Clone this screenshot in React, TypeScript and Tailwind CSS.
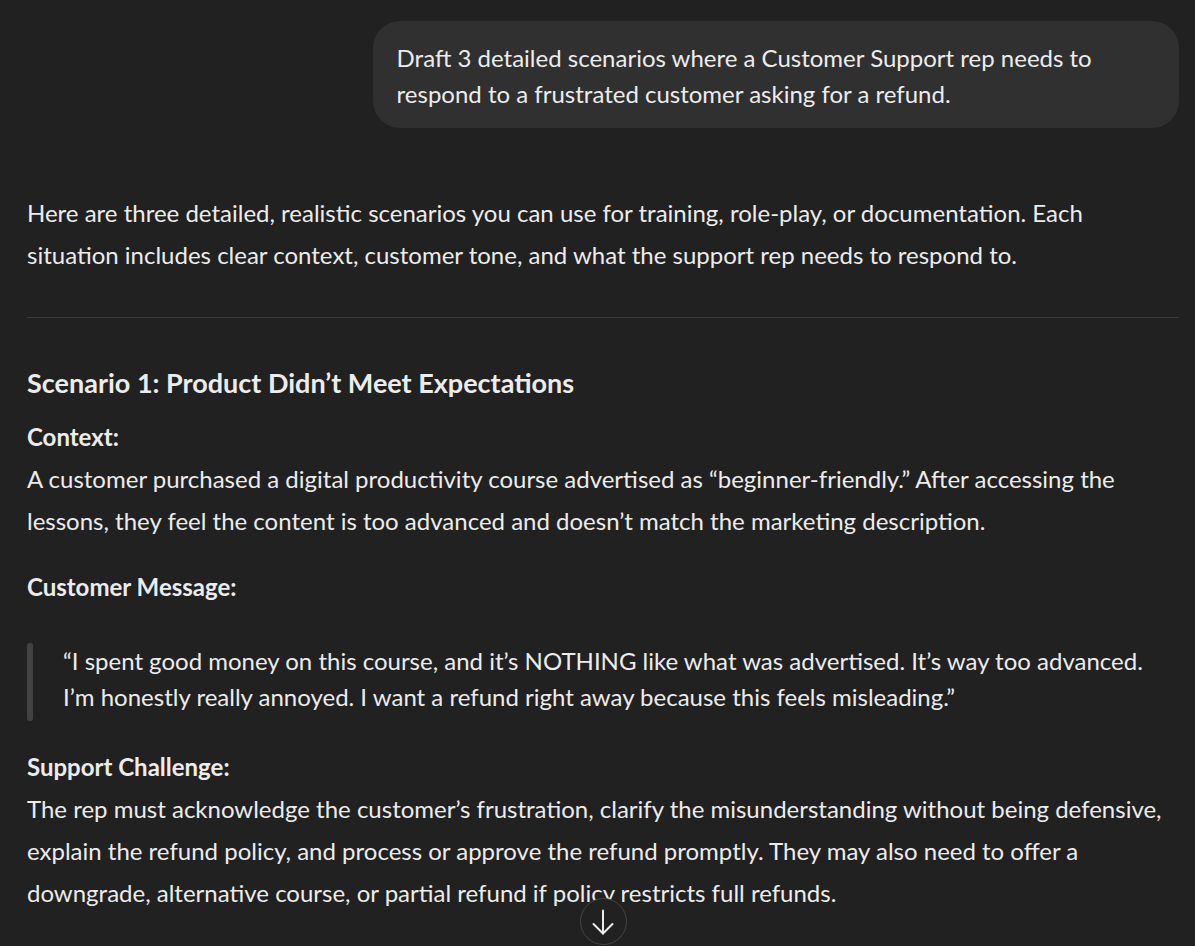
import React from "react";

export default function App() {
  return (
    <div
      className="h-[946px] w-full overflow-hidden bg-[#212121] text-[#ececec]"
      style={{ fontFamily: '"Segoe UI", Lato, "Noto Sans", sans-serif' }}
    >
      <div className="relative h-full pl-[27px] pr-[16px]">
        <div className="flex justify-end pt-[21px]">
          <div className="max-w-[70%] rounded-[27px] bg-[#303030] px-6 pt-[19px] pb-[16px] text-[24px] leading-[36px]">
            Draft 3 detailed scenarios where a Customer Support rep needs to respond to a frustrated customer asking for a refund.
          </div>
        </div>

        <div className="mt-[64px] text-[24px] leading-[42px]">
          <p>
            Here are three detailed, realistic scenarios you can use for training, role-play, or documentation. Each situation includes clear context, customer tone, and what the support rep needs to respond to.
          </p>
          <hr className="mt-[41px] border-0 border-t border-[#3a3a3a]" />
          <h3 className="mt-[47px] text-[27px] leading-[36px] font-bold">
            Scenario 1: Product Didn’t Meet Expectations
          </h3>
          <p className="mt-[15px]">
            <strong className="font-bold">Context:</strong>
            <br />
            A customer purchased a digital productivity course advertised as “beginner-friendly.” After accessing the lessons, they feel the content is too advanced and doesn’t match the marketing description.
          </p>
          <p className="mt-[24px]">
            <strong className="font-bold">Customer Message:</strong>
          </p>
          <blockquote className="mt-[35px] flex gap-[30px]">
            <div className="w-[6px] shrink-0 rounded-full bg-[#424242]" />
            <p className="pt-0 pb-[6px] leading-[36px]">
              “I spent good money on this course, and it’s NOTHING like what was advertised. It’s way too advanced. I’m honestly really annoyed. I want a refund right away because this feels misleading.”
            </p>
          </blockquote>
          <p className="mt-[25px]">
            <strong className="font-bold">Support Challenge:</strong>
            <br />
            The rep must acknowledge the customer’s frustration, clarify the misunderstanding without being defensive, explain the refund policy, and process or approve the refund promptly. They may also need to offer a downgrade, alternative course, or partial refund if policy restricts full refunds.
          </p>
        </div>

        <div className="absolute bottom-[1px] left-[27px] right-[16px] flex justify-center">
          <button className="flex h-[47px] w-[47px] items-center justify-center rounded-full border border-[#454545] bg-[#212121] text-[#ececec]">
            <svg width="26" height="26" viewBox="0 0 26 26" fill="none" stroke="currentColor" strokeWidth="2" strokeLinecap="round" strokeLinejoin="round">
              <path d="M13 1.5V24.5" />
              <path d="M3.5 15L13 24.5L22.5 15" />
            </svg>
          </button>
        </div>
      </div>
    </div>
  );
}
